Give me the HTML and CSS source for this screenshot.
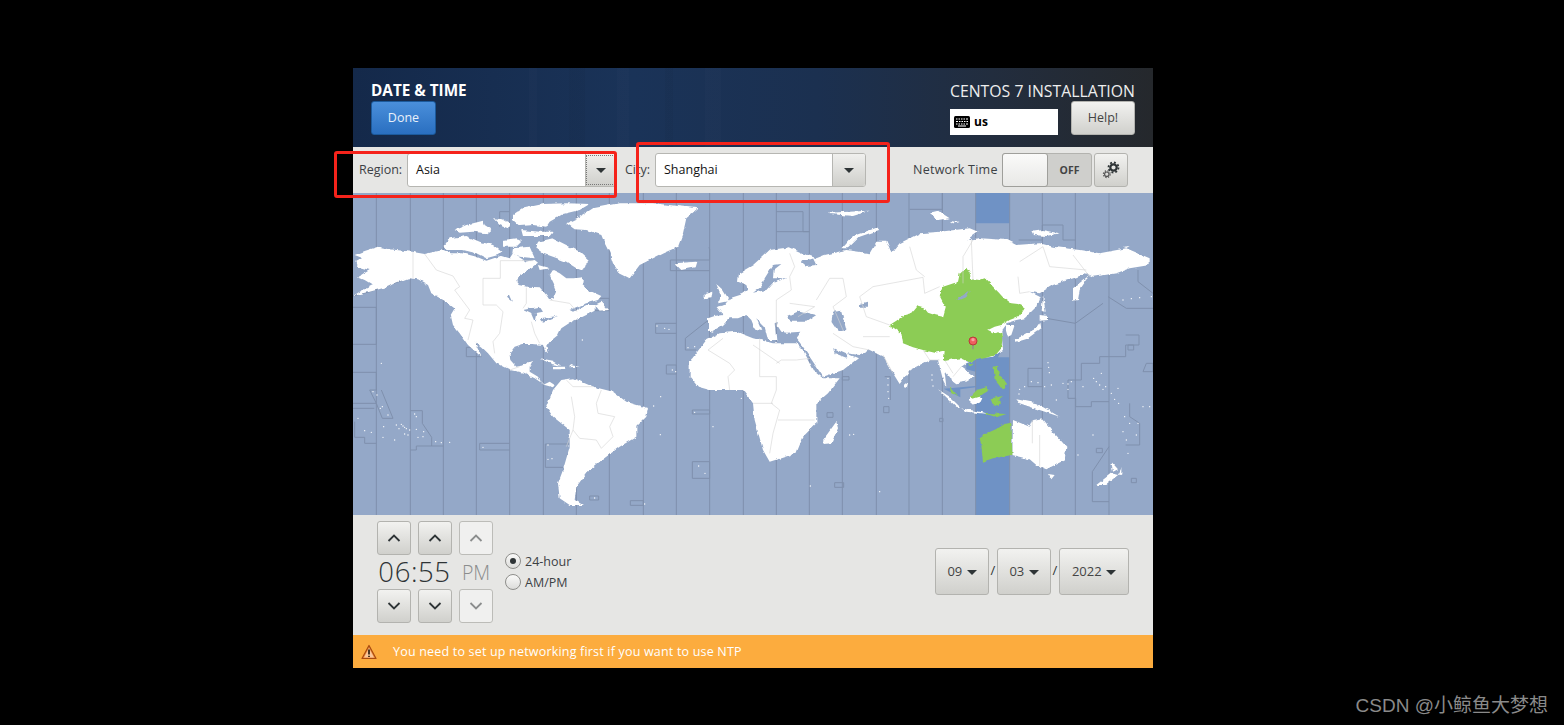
FILE: index.html
```html
<!DOCTYPE html>
<html lang="en">
<head>
<meta charset="utf-8">
<title>Date &amp; Time</title>
<link rel="stylesheet" href="styles.css">
</head>
<body>
<main class="window">
  <header class="topbar">
    <div class="topbar-left">
      <h1 class="title">DATE &amp; TIME</h1>
      <button class="btn-done">Done</button>
    </div>
    <div class="topbar-right">
      <div class="product">CENTOS 7 INSTALLATION</div>
      <div class="topbar-row">
        <div class="kbd-box">
          <svg class="kbd-icon" viewBox="0 0 16 12"><rect width="16" height="12" rx="1.5" fill="#000"/><path d="M2 3h1.500M4.500 3H6M7 3h1.500M9.500 3H11M12 3h2M2 5.500h2M5 5.500h1.500M7.500 5.500H9M10 5.500h1.500M12.500 5.500H14M2 8h1.500M4.500 8H6M7 8h1.500M9.500 8H11M12 8h2M4 10h8" stroke="#fff" stroke-width="1.100" fill="none"/></svg>
          <span class="kbd-text">us</span>
        </div>
        <button class="btn btn-help">Help!</button>
      </div>
    </div>
  </header>

  <section class="toolbar">
    <span class="lbl lbl-region">Region:</span>
    <div class="combo combo-region">
      <span class="combo-text">Asia</span>
      <span class="combo-btn combo-btn-focus"><i class="caret"></i></span>
    </div>
    <span class="lbl lbl-city">City:</span>
    <div class="combo combo-city">
      <span class="combo-text">Shanghai</span>
      <span class="combo-btn"><i class="caret"></i></span>
    </div>
    <span class="lbl lbl-ntp">Network Time</span>
    <div class="switch"><span class="switch-knob"></span><span class="switch-off">OFF</span></div>
    <button class="btn btn-gear" aria-label="settings">
      <svg class="gear" viewBox="0 0 18 18">
        <circle cx="11.500" cy="6.500" r="3.200" fill="none" stroke="#2e3436" stroke-width="2.200"/>
        <circle cx="11.500" cy="6.500" r="5" fill="none" stroke="#2e3436" stroke-width="1.800" stroke-dasharray="1.900 2"/>
        <circle cx="4.800" cy="13.200" r="2.200" fill="none" stroke="#555" stroke-width="1.200"/>
        <circle cx="4.800" cy="13.200" r="3.400" fill="none" stroke="#555" stroke-width="1.200" stroke-dasharray="1.300 1.400"/>
      </svg>
    </button>
  </section>

  <svg class="map" viewBox="0 9 2400 966" preserveAspectRatio="none">
    <defs>
      <filter id="rough" filterUnits="userSpaceOnUse" x="0" y="9" width="2400" height="966">
        <feTurbulence type="fractalNoise" baseFrequency="0.05" numOctaves="3" seed="4" result="n"/>
        <feDisplacementMap in="SourceGraphic" in2="n" scale="11" xChannelSelector="R" yChannelSelector="G"/>
      </filter>
    </defs>
    <rect class="sea" x="0" y="9" width="2400" height="966"/>
    <g transform="translate(1200,0)">
      <path class="band" d="M668 9H770V100H668ZM720 408L745 408V482L735 502H770V975H668V592L622 598V622L572 596L640 590L668 588V545L640 538V512L700 500Z"/>
    </g>
    <!-- time zone lines -->
    <path class="zone" d="M70 9V975M172 9V975M271 9V975M370 9V975M470 9V975M571 9V975M670 9V975M769 9V975M871 9V975M970 9V975M1070 9V975M1171 9V975
      M0 352H70V463H0M0 547H70V600H50L70 640H0M0 655H64M85 600L120 685H88L70 640M5 695V742H35V760H70M172 662H208V700L236 742V768H190V780H172M236 768H271M340 472H362L385 500H340ZM380 760V780H470M380 760H470M577 762H650M577 762V832H630M908 400V430H970M908 400H970M940 525H970V552H940ZM997 445L1060 395H1070M997 445V480H1030M1018 815H1070V865H1018ZM1018 660H1070V672H1018ZM832 932H871V946H832ZM710 918H737V930H710ZM952 210H1070V178L1068 172M952 210V242H1070M440 65H470M440 65V110M725 325H769V362H725M0 318L50 305L165 265"/>
    <g transform="translate(1200,0)">
      <path class="zone" d="M70 9V975M169 9V975M268 9V975M370 9V975M468 9V975M568 9V975M668 9V975M770 9V975M868 9V975M967 9V975M1068 9V975
        M70 65H150V125H170M170 125H70M470 58H568V9M268 560H288V570H268ZM222 668H240V682H222ZM395 560H412V630M392 650H408V668H392ZM560 685H570V695H560ZM245 878H272V892H245ZM797 150H868V105H930V150H967M1050 340L967 400L880 385M1065 320L1120 355H1200M1155 240V275L1200 310M1118 435H1158V465H1118V500H1040V520H985V570H945V625H968V650H1015V635H1068M1125 465H1142V480H1125ZM1130 640V680L1160 700V765H1118M1180 520H1200V545H1170ZM1030 775H1048V788H1030ZM1068 770L1018 845V935H1068M1135 865H1150V878H1135ZM825 535H868V590M825 535V590H870"/>
    </g>

    <g filter="url(#rough)">
      <!-- Americas and Greenland -->
      <path class="land" d="M5 195L35 183L75 170L110 178L150 182L180 186L215 192L245 185L272 180L290 190L330 190L370 200L400 212L445 197L470 205L480 190L520 215L545 210L555 218L525 240L500 255L490 272L500 285L525 290L560 292L580 315L590 330L600 325L610 300L602 280L590 255L600 240L620 250L640 265L665 265L690 262L688 285L705 300L745 318L735 330L700 340L680 350L650 360L660 365L700 345L725 345L725 362L700 375L680 385L655 395L625 415L615 435L590 455L580 470L585 490L575 480L570 465L540 462L510 462L485 470L470 490L472 510L490 530L515 525L525 515L540 510L530 530L530 545L555 560L570 585L590 575L605 585L600 592L575 585L545 565L510 548L470 540L430 520L405 490L385 470L365 455L385 500L345 465L320 430L300 405L293 375L305 355L280 335L235 310L225 285L195 268L165 265L125 280L105 290L50 305L0 318L20 305L60 285L35 270L15 262L50 240L15 230L10 215L30 205Z"/>
      <path class="land" d="M640 100L680 80L720 55L800 40L900 40L1035 55L1000 85L990 130L975 170L930 190L860 225L830 265L800 250L780 220L770 190L755 160L745 135L700 120L665 118Z"/>
      <path class="land" d="M290 145L340 138L380 155L420 165L445 185L435 195L400 205L370 190L330 180L280 180L275 165ZM305 120L340 105L390 92L395 105L415 118L400 130L360 125L320 128ZM420 85L450 88L470 100L465 115L440 105ZM480 75L510 55L570 42L640 40L710 42L680 60L630 72L590 95L580 110L540 105L500 108L480 90ZM505 120L560 125L600 125L590 138L510 138ZM555 155L600 145L640 165L680 185L710 212L695 225L690 242L670 235L640 215L600 200L570 190L550 175ZM555 225L590 235L560 240ZM450 150L490 145L510 150L490 170L450 170ZM480 175L530 170L545 205L500 200L478 190ZM725 345L745 335L768 360L740 362ZM965 220L1030 215L1025 232L985 240Z"/>
      <path class="land" d="M625 570L660 565L720 590L780 605L820 635L885 655L880 680L850 710L850 740L800 770L760 800L740 815L700 850L670 890L665 930L690 945L650 945L620 925L615 880L630 840L650 770L650 720L600 680L580 650L600 600Z"/>
      <path class="land" d="M560 505L600 512L625 527L595 522ZM600 530L640 530L635 538L600 538ZM650 525L680 530L650 532ZM1090 282L1110 300L1130 332L1095 340L1105 318ZM1055 312L1078 305L1075 325L1055 328Z"/>
      <path class="sea" d="M470 312L480 335L462 320ZM510 360L560 350L570 365L535 372ZM535 372L550 370L545 395ZM560 385L615 378L570 395ZM648 360L700 340L680 352Z"/>

      <g transform="translate(1200,0)">
        <!-- Africa -->
        <path class="land" d="M-190 515L-140 450L-100 430L-50 425L0 445L60 460L130 460L150 480L185 545L210 565L260 565L225 610L190 640L190 700L150 740L130 790L50 815L30 780L5 690L0 640L-30 600L-130 600L-165 590L-190 560Z"/>
        <!-- Eurasia -->
        <path class="land" d="M-135 385L-115 378L-90 375L-110 350L-85 345L-70 325L-30 312L-15 300L-20 285L-45 275L-42 250L0 225L50 180L110 172L150 190L190 205L215 195L280 180L350 190L370 155L400 155L415 190L440 160L500 130L560 125L650 115L675 125L640 150L680 145L760 150L790 165L860 160L900 170L980 180L1040 190L1120 175L1190 205L1190 225L1130 235L1090 250L1020 260L1000 250L970 262L900 285L860 310L830 305L860 320L850 350L815 385L790 390L760 400L745 420L750 480L720 500L680 505L640 520L625 530L665 560L640 575L610 580L590 565L575 545L580 590L570 570L555 510L530 510L470 540L440 582L420 550L390 500L350 480L320 495L280 490L315 505L270 540L210 560L170 500L150 470L130 445L145 425L100 428L85 425L72 405L75 395L65 400L70 450L45 450L35 410L10 385L25 420L5 415L-5 390L-20 375L-45 385L-70 385L-90 405L-125 425L-135 420Z"/>
        <path class="sea" d="M0 308L25 290L35 265L60 225L85 222L62 240L60 265L100 265L60 278L40 300ZM105 378L140 362L190 375L160 395L110 395ZM240 365L265 362L280 420L255 425L235 395ZM320 342L345 335L345 350L322 350ZM240 475L285 495L280 503L245 490ZM145 215L180 205L190 225L160 228Z"/>
        <!-- Islands -->
        <path class="land" d="M268 175L300 138L375 112L378 120L320 140L285 175ZM530 68L555 62L590 85L555 90ZM590 92L620 98L600 100ZM835 125L870 120L920 130L880 138L840 135ZM225 68L350 62L300 78L230 72ZM1110 170L1130 168L1120 174ZM960 295L1010 255L980 300L975 330L960 332ZM870 315L878 365L866 362ZM860 375L885 378L885 390L860 392ZM785 450L850 415L862 398L865 415L825 445L790 455ZM755 405L785 405L775 435L765 440ZM210 750L250 695L255 715L235 760L212 762ZM453 580L465 582L462 594L453 592ZM555 598L590 620L625 655L610 650ZM625 655L680 665L705 672L640 665ZM648 622L668 616L688 622L680 638L660 644L648 634ZM790 628L850 640L920 680L860 660L800 640ZM780 690L830 710L838 690L868 685L900 725L940 770L935 810L880 838L850 825L830 808L778 795ZM885 852L905 855L895 868ZM1030 885L1075 850L1095 855L1105 835L1105 850L1060 885ZM1075 815L1095 838L1080 845Z"/>
        <path class="green" d="M410 405L430 392L455 375L478 368L495 347L512 352L525 368L548 376L570 380L578 352L560 318L570 290L595 282L615 275L620 252L640 233L650 250L655 268L680 270L695 265L715 285L735 305L750 322L775 340L795 342L815 352L805 368L795 380L770 390L748 404L725 410L705 420L725 430L745 425L748 450L745 475L728 495L700 503L670 510L650 516L625 505L600 508L572 514L575 482L545 488L510 480L480 472L450 460L445 430Z"/>
        <path class="sea" d="M612 328L650 302L640 322L620 330Z"/>
        <path class="green" d="M680 745L705 728L735 715L755 702L775 698L778 795L745 800L720 805L690 815L687 790L685 765ZM722 530L735 528L737 555L750 565L762 582L748 600L738 585L725 570ZM650 622L672 600L700 592L710 600L690 612L680 620L660 626ZM590 590L612 618L595 610ZM712 625L732 622L750 618L735 630L745 640L725 650L718 640ZM645 518L660 522L650 528ZM690 668L760 672L730 682Z"/>
      </g>
    </g>

    <path class="dots" d="M60 605h0M72 615h0M88 650h0M82 655h0M105 675h0M15 685h0M35 722h0M55 727h0M90 742h0M125 750h0M92 710h0M130 705h0M145 703h0M155 712h0M170 720h0M190 718h0M212 725h0M210 740h0M195 742h0M165 735h0M155 732h0M185 672h0M190 680h0M248 755h0M265 758h0M290 757h0M390 772h0M585 765h0M585 808h0M597 806h0M85 520h0M688 450h0M912 408h0M935 415h0M948 418h0M902 648h0M923 620h0M922 734h0M1080 710h0M1037 828h0M1056 850h0M725 924h0M875 942h0M958 540h0M968 545h0M1005 473h0M1025 470h0M1025 667h0M1165 625h0M150 708h0M160 716h0M138 716h0"/>
    <g transform="translate(1200,0)">
      <path class="dots" d="M885 518h0M887 532h0M889 548h0M910 630h0M955 575h0M990 590h0M1022 565h0M1030 575h0M1045 550h0M1040 585h0M1050 598h0M1058 590h0M1075 610h0M1085 628h0M1097 640h0M1095 595h0M800 598h0M798 612h0M815 590h0M835 575h0M855 578h0M875 590h0M895 585h0M930 580h0M945 582h0M945 598h0M1110 330h0M1135 326h0M1160 323h0M1195 320h0M1115 680h0M1110 725h0M1130 700h0M1120 750h0M1155 700h0M1150 735h0M1170 650h0M1190 650h0M1125 790h0M405 565h0M405 585h0M405 605h0M407 625h0M537 555h0M537 570h0M540 588h0M290 650h0M290 735h0M302 733h0M172 888h0M380 905h0M975 795h0M1020 735h0"/>
      <path class="border" d="M110 190L125 230L110 260L115 300L70 330L70 410M190 330L230 265L270 265L280 320L240 350L270 420M320 320L360 290L510 262L515 310L560 290M320 320L340 380L410 405M110 340L185 350L135 380M20 445V560L70 560L70 600L55 640L80 660L60 730L50 790M85 510H130L170 505M70 520L85 510M0 640H60M75 690H185M0 465L80 520M240 430L300 470L350 480M330 440H410M390 495L420 550M510 480L530 510L560 510M575 510L600 550M625 530L600 560M660 150L630 200L630 280M655 150L660 270M470 170L490 240L515 260M795 260L800 310L830 305M800 215L870 170M870 170L890 230L1000 240M960 195L1010 260M860 735V830M838 690V760"/>
    </g>
    <path class="border" d="M180 186V265M215 192L250 240L300 258L320 290L305 300L350 360L335 385L360 390L345 450M442 212V265H390V345H430L450 365L440 430L420 455L425 490M520 293V340L510 355M590 330L650 340L672 365M535 395L545 430L560 460M442 212H540M470 540L500 530M640 570L660 590L720 590M655 620L665 680L660 720L680 745L730 750L745 775L780 740L770 710L785 680L735 670L730 640L745 600M660 720L640 770M1065 480L1130 520L1145 540L1125 560L1130 600M1065 480L1110 445"/>

    <!-- location pin -->
    <g transform="translate(1200,0)">
      <path class="pin-stem" d="M660 462V478"/>
      <circle class="pin-head" cx="660" cy="453" r="12"/>
      <circle class="pin-shine" cx="660" cy="449" r="5"/>
    </g>
  </svg>

  <section class="controls">
    <div class="time-grid">
      <button class="btn spin"><svg class="chev" viewBox="0 0 14 8"><path d="M1.500 7L7 1.500 12.500 7"/></svg></button>
      <button class="btn spin"><svg class="chev" viewBox="0 0 14 8"><path d="M1.500 7L7 1.500 12.500 7"/></svg></button>
      <button class="spin spin-off"><svg class="chev" viewBox="0 0 14 8"><path d="M1.500 7L7 1.500 12.500 7"/></svg></button>
      <div class="time-digits">06:55</div>
      <div class="time-pm">PM</div>
      <button class="btn spin"><svg class="chev" viewBox="0 0 14 8"><path d="M1.500 1L7 6.500 12.500 1"/></svg></button>
      <button class="btn spin"><svg class="chev" viewBox="0 0 14 8"><path d="M1.500 1L7 6.500 12.500 1"/></svg></button>
      <button class="spin spin-off"><svg class="chev" viewBox="0 0 14 8"><path d="M1.500 1L7 6.500 12.500 1"/></svg></button>
    </div>
    <div class="radios">
      <div class="radio-row"><span class="radio radio-on"></span><span>24-hour</span></div>
      <div class="radio-row"><span class="radio"></span><span>AM/PM</span></div>
    </div>
    <div class="date">
      <button class="btn date-btn date-short">09 <i class="caret caret-date"></i></button>
      <span class="slash">/</span>
      <button class="btn date-btn date-short">03 <i class="caret caret-date"></i></button>
      <span class="slash">/</span>
      <button class="btn date-btn date-year">2022 <i class="caret caret-date"></i></button>
    </div>
  </section>

  <footer class="warning">
    <svg class="warn-icon" viewBox="0 0 16 16"><path d="M8 1.500L15 14.500H1Z" fill="#ee8a3a" stroke="#a84b10" stroke-width="1.200" stroke-linejoin="round"/><path d="M8 4L13 13.500H3Z" fill="#f9c79a"/><path d="M8 5.500V10.500M8 11.800V13" stroke="#3a2a1a" stroke-width="1.800" fill="none"/></svg>
    <span>You need to set up networking first if you want to use NTP</span>
  </footer>
</main>

<div class="mark mark-region"></div>
<div class="mark mark-city"></div>
<div class="watermark">CSDN @小鲸鱼大梦想</div>
</body>
</html>
```
FILE: styles.css
```css
* { box-sizing: border-box; }
html, body { margin: 0; height: 100%; }
body {
  background: #000;
  font-family: "Open Sans", "Noto Sans", sans-serif;
  color: #2e3436;
  position: relative;
  overflow: hidden;
  padding: 68px 0 0 353px;
}
button { font-family: inherit; padding: 0; }
.window { width: 800px; height: 600px; display: flex; flex-direction: column; background: #e6e6e4; }

.topbar {
  height: 79px;
  flex: none;
  display: flex;
  justify-content: space-between;
  padding: 12px 18px 12px;
  color: #fff;
  background:
    linear-gradient(90deg, transparent 0 22%, rgba(255,255,255,.01) 22% 23%, transparent 23% 27%, rgba(0,0,0,.03) 27% 29%, transparent 29% 33%, rgba(255,255,255,.012) 33% 34.500%, transparent 34.500% 39%, rgba(0,0,0,.03) 39% 40%, transparent 40% 44%, rgba(255,255,255,.01) 44% 46%, transparent 46%),
    linear-gradient(90deg, #14294a 0%, #1a3358 35%, #1b3050 58%, #222d3e 80%, #25282c 100%);
}
.title { margin: 0; font-size: 15.300px; font-weight: 700; line-height: 21px; height: 21px; color: #fff; }
.btn-done {
  display: block;
  width: 65px;
  height: 34px;
  padding-bottom: 2px;
  border: 1px solid #1c5a9c;
  border-radius: 3px;
  color: #e8f0fa;
  font-size: 12.500px;
  background: linear-gradient(#4a8fdb, #2a6fc0);
}
.topbar-right { width: 185px; display: flex; flex-direction: column; }
.product { font-size: 15.800px; line-height: 22px; height: 21px; color: #eee; white-space: nowrap; }
.topbar-row { display: flex; justify-content: space-between; align-items: flex-end; }
.kbd-box { width: 108px; height: 26px; background: #fff; color: #000; display: flex; align-items: center; padding-left: 4px; gap: 4px; }
.kbd-icon { width: 16px; height: 12px; }
.kbd-text { font-size: 12px; font-weight: 700; line-height: 1; }

.btn {
  border: 1px solid #b3b3af;
  border-radius: 3px;
  background: linear-gradient(#f2f2f0, #d0d0cc);
  color: #2e3436;
}
.btn-help { width: 64px; height: 34px; padding-bottom: 2px; font-size: 12.500px; color: #444; }

.toolbar { height: 46px; flex: none; display: flex; align-items: flex-start; padding-top: 6px; position: relative; font-size: 12.500px; }
.lbl { line-height: 34px; color: #3c4144; white-space: nowrap; }
.lbl-region { margin-left: 6px; width: 48px; }
.lbl-city { margin-left: 8px; width: 30px; }
.lbl-ntp { margin-left: 47px; width: 89px; letter-spacing: .25px; }
.combo { height: 34px; display: flex; border: 1px solid #b6b6b2; border-radius: 3px; background: #fff; overflow: hidden; }
.combo-region { width: 210px; }
.combo-city { width: 211px; }
.combo-text { flex: 1; padding-left: 8px; line-height: 32px; color: #111; }
.combo-btn { width: 33px; display: flex; align-items: center; justify-content: center; border-left: 1px solid #b6b6b2; background: linear-gradient(#f0f0ee, #cfcfcb); }
.combo-btn-focus { width: 31px; outline: 1px dotted #777; outline-offset: -2px; }
.caret { display: inline-block; width: 0; height: 0; border-left: 5px solid transparent; border-right: 5px solid transparent; border-top: 5px solid #2e3436; vertical-align: middle; }
.caret-date { margin-left: 1px; }
.switch { width: 90px; height: 34px; border: 1px solid #b3b3af; border-radius: 3px; background: #cfcfcc; display: flex; align-items: center; }
.switch-knob { width: 46px; height: 34px; margin: -1px 0 -1px -1px; border: 1px solid #9f9f9b; border-radius: 3px; background: linear-gradient(#fafaf9, #e8e8e6); }
.switch-off { flex: 1; text-align: center; font-size: 10.500px; font-weight: 700; color: #444; }
.btn-gear { width: 34px; height: 34px; margin-left: 2px; display: flex; align-items: center; justify-content: center; }
.gear { width: 18px; height: 18px; }

.map { display: block; width: 800px; height: 322px; flex: none; filter: blur(.3px); }
.sea { fill: #94a8c8; }
.band { fill: #6f92c5; }
.zone { fill: none; stroke: #7f90ad; stroke-width: 3; }
.land { fill: #fff; }
.green { fill: #8ccc55; }
.border { fill: none; stroke: #d4d4d4; stroke-width: 1.800; }
.dots { fill: none; stroke: #fff; stroke-width: 4; stroke-linecap: round; }
.pin-stem { stroke: #8e8e8e; stroke-width: 4; fill: none; }
.pin-head { fill: #ee5f5f; stroke: #b93a3a; stroke-width: 3; }
.pin-shine { fill: #f7a0a0; }

.controls { height: 120px; flex: none; display: flex; padding: 6px 24px 0; font-size: 12.500px; }
.time-grid { display: grid; grid-template-columns: 34px 34px 34px; grid-template-rows: 34px 34px 34px; gap: 0 7px; position: relative; }
.spin { width: 34px; height: 34px; display: flex; align-items: center; justify-content: center; }
.spin-off { border: 1px solid #bcbcb8; border-radius: 3px; background: #f0f0ef; }
.chev { width: 14px; height: 8px; fill: none; stroke: #2e3436; stroke-width: 1.800; }
.spin-off .chev { stroke: #8b8d8d; }
.time-digits { grid-column: 1 / span 2; text-align: center; font-size: 27.500px; font-weight: 350; line-height: 34px; letter-spacing: .6px; color: #2e3436; }
.time-pm { text-align: center; font-size: 19.500px; font-weight: 350; line-height: 36px; color: #8b8d8d; }
.radios { margin: 32px 0 0 12px; display: flex; flex-direction: column; gap: 5px; width: 100px; }
.radio-row { display: flex; align-items: center; gap: 4px; height: 16px; color: #3c4144; }
.radio { width: 16px; height: 16px; flex: none; border: 1px solid #8e8e8b; border-radius: 50%; background: linear-gradient(#fafaf9, #dcdcda); display: flex; align-items: center; justify-content: center; }
.radio-on::after { content: ""; width: 6px; height: 6px; border-radius: 50%; background: #2e3436; }
.date { margin: 27px 0 0 auto; display: flex; height: 47px; }
.date-btn { height: 47px; padding-bottom: 2px; font-size: 13px; color: #444; }
.date-short { width: 54px; }
.date-year { width: 70px; }
.slash { width: 8px; line-height: 45px; font-size: 13px; text-align: center; }

.warning { height: 33px; flex: none; display: flex; align-items: center; gap: 16px; padding-left: 8px; background: #fcac3e; color: #fff; font-size: 12.500px; letter-spacing: .19px; }
.warn-icon { width: 16px; height: 16px; flex: none; }

.mark { position: absolute; border: 3px solid #f5231b; border-radius: 3px; pointer-events: none; }
.mark-region { left: 334px; top: 151px; width: 283px; height: 47px; }
.mark-city { left: 636px; top: 142px; width: 254px; height: 61px; }
.watermark { position: absolute; right: 16px; top: 694px; font-family: "Liberation Sans", "Noto Sans CJK SC", sans-serif; font-size: 19px; line-height: 24px; color: #8a8a8a; white-space: nowrap; }
```
